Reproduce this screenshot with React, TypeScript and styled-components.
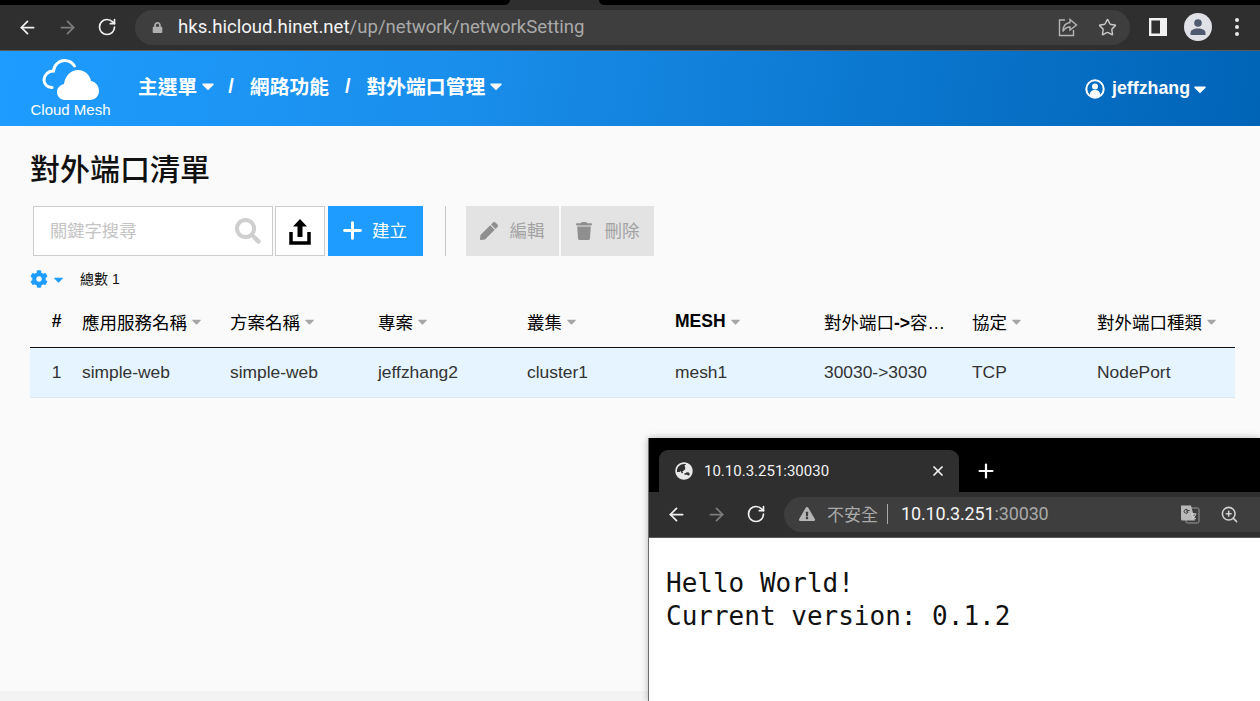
import styled, { createGlobalStyle } from "styled-components";
import { ArrowLeft, ArrowRight, RotateCw, Star, Plus, X, ZoomIn } from "lucide-react";
import { FaCaretDown, FaCog, FaLock, FaPen, FaSearch, FaTrash, FaGlobeAsia, FaExclamationTriangle } from "react-icons/fa";

const SANS = `"Liberation Sans", "Noto Sans CJK TC", sans-serif`;
const UI = `"Roboto", "Noto Sans CJK TC", sans-serif`;

const GlobalStyle = createGlobalStyle`
  html, body { margin: 0; padding: 0; background: #fafafa; }
  * { box-sizing: border-box; }
`;

const Page = styled.div`
  position: relative;
  width: 1260px;
  height: 701px;
  overflow: hidden;
  display: flex;
  flex-direction: column;
  background: #fafafa;
  font-family: ${SANS};
`;

// Browser chrome
const TabEdge = styled.div`
  display: flex;
  height: 5px;
  background: #2f2f2f;
  justify-content: space-between;
`;

const TabEdgePiece = styled.div<{ $w: number; $corner: "left" | "right" }>`
  width: ${(p) => p.$w}px;
  background: #000;
  border-bottom-${(p) => p.$corner}-radius: 5px;
`;

const BrowserBar = styled.div`
  height: 46px;
  display: flex;
  align-items: center;
  background: #2f2f2f;
  border-bottom: 1px solid #5a5a5a;
  padding: 0 0 1px 17px;
  color: #f1f1f1;
`;

const NavIcons = styled.div<{ $gap: number }>`
  display: flex;
  align-items: center;
  gap: ${(p) => p.$gap}px;
`;

const Omnibox = styled.div`
  width: 995px;
  height: 35px;
  margin-left: 18px;
  border-radius: 18px;
  background: #3e3e3e;
  display: flex;
  align-items: center;
  padding: 0 13px 0 17px;
`;

const Url = styled.span`
  flex: 1;
  margin-left: 15px;
  font-family: ${UI};
  font-size: 18.6px;
  color: #a9a9a9;
  white-space: nowrap;
  b { font-weight: 400; color: #f4f4f4; }
`;

const OmniIcons = styled.div`
  display: flex;
  align-items: center;
  gap: 20px;
  color: #c8c8c8;
`;

const BarEnd = styled.div`
  display: flex;
  align-items: center;
  margin-left: 19px;
`;

const Avatar = styled.div`
  width: 28px;
  height: 28px;
  margin-left: 17px;
  border-radius: 50%;
  background: #dfe1e6;
  display: flex;
  align-items: center;
  justify-content: center;
`;

const Dots = styled.div`
  margin-left: 23px;
  display: flex;
  flex-direction: column;
  gap: 3px;
  i {
    width: 4px;
    height: 4px;
    border-radius: 50%;
    background: #e8e8e8;
  }
`;

// App header
const AppHeader = styled.header`
  height: 75px;
  display: flex;
  align-items: center;
  color: #fff;
  background: linear-gradient(97deg, #1e9cff 0%, #1a8fec 35%, #0b77cf 70%, #0064b6 100%);
  padding: 0 50px 0 30px;
`;

const Logo = styled.div`
  width: 81px;
  display: flex;
  flex-direction: column;
  align-items: center;
  font-size: 15px;
  line-height: 17px;
  margin-top: -2px;
  white-space: nowrap;
  svg { margin-bottom: -1px; }
`;

const Breadcrumb = styled.nav`
  display: flex;
  align-items: center;
  margin-left: 27px;
  margin-top: -6px;
  flex: 1;
  font-size: 19.8px;
  font-weight: 700;
`;

const Crumb = styled.span`
  display: flex;
  align-items: center;
  gap: 1px;
  svg { margin-right: -6px; }
`;

const Slash = styled.span`
  margin: 2px 16px 0;
`;

const UserMenu = styled.div`
  display: flex;
  align-items: center;
  font-size: 17.8px;
  font-weight: 700;
  span { margin-left: 7px; }
`;

// Content
const Content = styled.main`
  flex: 1;
  padding: 25px 25px 0 30px;
`;

const Title = styled.h1`
  margin: 0;
  height: 38px;
  font-size: 30px;
  line-height: 38px;
  font-weight: 500;
  color: #111;
`;

const Toolbar = styled.div`
  display: flex;
  margin: 17px 0 0 3px;
  height: 50px;
`;

const SearchBox = styled.div`
  width: 240px;
  border: 1px solid #ccc;
  background: #fff;
  display: flex;
  align-items: center;
  justify-content: space-between;
  padding: 0 11px 3px 16px;
  font-size: 17.3px;
  color: #c4c4c4;
  margin-right: 2px;
  svg { margin-top: 3px; }
`;

const UploadButton = styled.div`
  width: 50px;
  border: 1px solid #ccc;
  background: #fff;
  display: flex;
  align-items: center;
  justify-content: center;
  margin-right: 3px;
`;

const ActionButton = styled.div<{ $primary?: boolean; $width: number }>`
  width: ${(p) => p.$width}px;
  display: flex;
  align-items: center;
  justify-content: center;
  gap: ${(p) => (p.$primary ? 6 : 11)}px;
  font-size: 17.6px;
  background: ${(p) => (p.$primary ? "#1e9cff" : "#e3e3e3")};
  color: ${(p) => (p.$primary ? "#fff" : "#a3a3a3")};
  margin-right: 2px;
  padding: 0 ${(p) => (p.$primary ? 5 : 0)}px 3px 0;
  svg {
    margin-top: ${(p) => (p.$primary ? 1 : 3)}px;
    color: ${(p) => (p.$primary ? "#fff" : "#8f8f8f")};
  }
`;

const Divider = styled.div`
  width: 1px;
  background: #c8c8c8;
  margin: 0 20px 0 20px;
`;

const SummaryRow = styled.div`
  display: flex;
  align-items: center;
  height: 20px;
  margin-top: 13px;
  color: #1e9cff;
`;

const SummaryCaret = styled(FaCaretDown)`
  margin-left: 3px;
`;

const Total = styled.span`
  margin: -2px 0 0 14px;
  font-size: 14px;
  color: #111;
`;

const GridRow = styled.div`
  display: grid;
  grid-template-columns: 52px 148px 148px 149px 148px 149px 148px 125px 138px;
  align-items: center;
`;

const HeadRow = styled(GridRow)`
  height: 50px;
  margin-top: 9px;
  padding-bottom: 3px;
  border-bottom: 1px solid #111;
`;

const BodyRow = styled(GridRow)`
  height: 50px;
  background: #e6f4ff;
  border-bottom: 1px solid #dbe7f0;
  padding-bottom: 1px;
  font-size: 17.4px;
  color: #333;
`;

const HeadCell = styled.div<{ $center?: boolean }>`
  display: flex;
  align-items: center;
  gap: 2px;
  font-size: 17.5px;
  font-weight: 400;
  color: #000;
  white-space: nowrap;
  justify-content: ${(p) => (p.$center ? "center" : "flex-start")};
  padding-left: ${(p) => (p.$center ? "1px" : "0")};
  svg { color: #a6a6a6; }
`;

const Strong = styled.b`
  font-weight: 700;
`;

const Cell = styled.div<{ $center?: boolean }>`
  text-align: ${(p) => (p.$center ? "center" : "left")};
  padding-left: ${(p) => (p.$center ? "1px" : "0")};
`;

const FootStrip = styled.div`
  height: 10px;
  background: #f3f3f3;
`;

// Second browser window, lying over the page
const FloatingWindow = styled.section`
  position: absolute;
  left: 648px;
  top: 438px;
  width: 612px;
  height: 263px;
  background: #fff;
  border-left: 1px solid #6b6b6b;
  box-shadow: 0 0 7px rgba(0, 0, 0, 0.28);
  display: flex;
  flex-direction: column;
`;

const TabStrip = styled.div`
  height: 54px;
  flex: none;
  background: #000;
  display: flex;
  align-items: flex-end;
  padding-left: 10px;
  color: #fff;
`;

const Tab = styled.div`
  width: 300px;
  height: 42px;
  background: #2f2f2f;
  border-radius: 9px 9px 0 0;
  display: flex;
  align-items: center;
  padding: 0 13px 0 16px;
  font-family: ${UI};
  font-size: 15px;
  color: #f2f2f2;
  span { flex: 1; margin-left: 11px; }
`;

const NewTab = styled.div`
  margin: 0 0 10px 16px;
  height: 22px;
  display: flex;
  align-items: center;
`;

const WindowBar = styled.div`
  height: 46px;
  flex: none;
  background: #2f2f2f;
  border-bottom: 1px solid #5a5a5a;
  display: flex;
  align-items: center;
  padding: 0 0 1px 17px;
  color: #f1f1f1;
`;

const WindowOmnibox = styled.div`
  flex: 1;
  height: 35px;
  margin-left: 18px;
  background: #3e3e3e;
  border-radius: 18px 0 0 18px;
  display: flex;
  align-items: center;
  padding: 0 21px 0 15px;
  font-family: ${UI};
  font-size: 18px;
  letter-spacing: -0.15px;
  color: #a9a9a9;
`;

const Insecure = styled.span`
  margin: -1px 0 0 12px;
  font-size: 17px;
  letter-spacing: 0;
  color: #a9a9a9;
`;

const Sep = styled.i`
  width: 1px;
  height: 20px;
  background: #a9a9a9;
  margin: 0 13px 0 9px;
`;

const Address = styled.span`
  flex: 1;
  margin-top: -1px;
  b { font-weight: 400; color: #f4f4f4; }
`;

const Plain = styled.pre`
  margin: 29px 0 0 17px;
  font-family: "DejaVu Sans Mono", monospace;
  font-size: 26px;
  line-height: 33px;
  color: #111;
`;

// Drawings
const Cloud = () => (
  <svg width="60" height="44" viewBox="0 0 60 44">
    <path
      d="M33.500 8C31 4 27 2.500 23.500 2.500 18 2.500 13 7 12.500 13 7 13 3 17.500 3 22c0 4 3 7 8 7.500"
      fill="none"
      stroke="#fff"
      strokeWidth="3"
      strokeLinecap="round"
    />
    <path
      d="M24 42c-5 0-8-4-8-8s3-7 7-8c1-8 7-14 14-14s12 5 13 11c5 1 8 5 8 10 0 5-4 9-9 9z"
      fill="#fff"
    />
  </svg>
);

const UserCircle = () => (
  <svg width="20" height="20" viewBox="0 0 20 20">
    <circle cx="10" cy="10" r="8.700" fill="none" stroke="#fff" strokeWidth="2" />
    <circle cx="10" cy="7.500" r="3" fill="#fff" />
    <path d="M4.800 16c0-3.500 2-5 5.200-5s5.200 1.500 5.200 5l-2 2.200h-6.500z" fill="#fff" />
  </svg>
);

const UploadIcon = () => (
  <svg width="22" height="27" viewBox="0 0 22 27">
    <path d="M11 1l7 7.500h-4.500V19h-5V8.500H4z" fill="#000" />
    <path d="M2 14v11h18V14" fill="none" stroke="#000" strokeWidth="3.500" />
  </svg>
);

const ShareIcon = () => (
  <svg width="20" height="20" viewBox="0 0 20 20" fill="none" stroke="#b5b5b5" strokeWidth="1.400">
    <path d="M7 3H1.500v15.500h14V13" />
    <path d="M12 2.500l6.500 5.500-6.500 5V10C8.500 10 6.500 11.500 5 14.500 5 9.500 7.500 6 12 5.500z" />
  </svg>
);

const SidePanelIcon = () => (
  <svg width="18" height="18" viewBox="0 0 18 18">
    <path d="M1.200 1.200h15.600v15.600H1.200z" fill="none" stroke="#f1f1f1" strokeWidth="2.400" />
    <path d="M11 1.200h6v15.600h-6z" fill="#f1f1f1" />
  </svg>
);

const AvatarPerson = () => (
  <svg width="18" height="18" viewBox="0 0 18 18">
    <circle cx="9" cy="5" r="3.800" fill="#4f5a70" />
    <path d="M1.500 17v-2c0-3 3-4.500 7.500-4.500s7.500 1.500 7.500 4.500v2z" fill="#4f5a70" />
  </svg>
);

const TranslateIcon = () => (
  <svg width="20" height="20" viewBox="0 0 20 20">
    <rect x="6" y="4" width="13" height="15" rx="1.500" fill="none" stroke="#9a9a9a" strokeWidth="1" />
    <path d="M1 1.500h10l4 15H2.500A1.500 1.500 0 0 1 1 15z" fill="#b9b9b9" />
    <path d="M9.500 6.500H6.800v1.400h1.300a2 2 0 1 1-.5-2" fill="none" stroke="#3e3e3e" strokeWidth="1" />
    <path d="M11 10h5.500M13.800 9v1.500M15.500 10.500c-.5 2-2 3.500-4 4.500M12 11.500c.7 1.300 2.300 2.800 4 3.500" fill="none" stroke="#dcdcdc" strokeWidth="1" />
  </svg>
);

const columns = ["應用服務名稱", "方案名稱", "專案", "叢集"];
const cells = ["simple-web", "simple-web", "jeffzhang2", "cluster1", "mesh1", "30030->3030", "TCP", "NodePort"];

export default function App() {
  return (
    <Page>
      <GlobalStyle />
      <TabEdge>
        <TabEdgePiece $w={510} $corner="right" />
        <TabEdgePiece $w={661} $corner="left" />
      </TabEdge>
      <BrowserBar>
        <NavIcons $gap={19}>
          <ArrowLeft size={21} strokeWidth={2} />
          <ArrowRight size={21} strokeWidth={2} color="#7d7d7d" />
          <RotateCw size={20} strokeWidth={2} />
        </NavIcons>
        <Omnibox>
          <FaLock size={11} color="#b0b0b0" />
          <Url>
            <b>hks.hicloud.hinet.net</b>/up/network/networkSetting
          </Url>
          <OmniIcons>
            <ShareIcon />
            <Star size={19} strokeWidth={1.8} />
          </OmniIcons>
        </Omnibox>
        <BarEnd>
          <SidePanelIcon />
          <Avatar>
            <AvatarPerson />
          </Avatar>
          <Dots>
            <i />
            <i />
            <i />
          </Dots>
        </BarEnd>
      </BrowserBar>

      <AppHeader>
        <Logo>
          <Cloud />
          Cloud Mesh
        </Logo>
        <Breadcrumb>
          <Crumb>
            主選單
            <FaCaretDown size={20} />
          </Crumb>
          <Slash>/</Slash>
          <Crumb>網路功能</Crumb>
          <Slash>/</Slash>
          <Crumb>
            對外端口管理
            <FaCaretDown size={20} />
          </Crumb>
        </Breadcrumb>
        <UserMenu>
          <UserCircle />
          <span>jeffzhang</span>
          <FaCaretDown size={20} />
        </UserMenu>
      </AppHeader>

      <Content>
        <Title>對外端口清單</Title>
        <Toolbar>
          <SearchBox>
            關鍵字搜尋
            <FaSearch size={26} color="#cfcfcf" />
          </SearchBox>
          <UploadButton>
            <UploadIcon />
          </UploadButton>
          <ActionButton $primary $width={95}>
            <Plus size={27} strokeWidth={2.6} />
            建立
          </ActionButton>
          <Divider />
          <ActionButton $width={93}>
            <FaPen size={18} />
            編輯
          </ActionButton>
          <ActionButton $width={93}>
            <FaTrash size={18} />
            刪除
          </ActionButton>
        </Toolbar>
        <SummaryRow>
          <FaCog size={18} />
          <SummaryCaret size={15} />
          <Total>總數 1</Total>
        </SummaryRow>
        <HeadRow>
          <HeadCell $center>
            <Strong>#</Strong>
          </HeadCell>
          {columns.map((name) => (
            <HeadCell key={name}>
              {name}
              <FaCaretDown size={15} />
            </HeadCell>
          ))}
          <HeadCell>
            <Strong>MESH</Strong>
            <FaCaretDown size={15} />
          </HeadCell>
          <HeadCell>
            <span>
              對外端口<Strong>-&gt;</Strong>容…
            </span>
          </HeadCell>
          <HeadCell>
            協定
            <FaCaretDown size={15} />
          </HeadCell>
          <HeadCell>
            對外端口種類
            <FaCaretDown size={15} />
          </HeadCell>
        </HeadRow>
        <BodyRow>
          <Cell $center>1</Cell>
          {cells.map((text, i) => (
            <Cell key={i}>{text}</Cell>
          ))}
        </BodyRow>
      </Content>
      <FootStrip />

      <FloatingWindow>
        <TabStrip>
          <Tab>
            <FaGlobeAsia size={18} color="#e8e8e8" />
            <span>10.10.3.251:30030</span>
            <X size={16} strokeWidth={2.6} />
          </Tab>
          <NewTab>
            <Plus size={22} strokeWidth={2.4} />
          </NewTab>
        </TabStrip>
        <WindowBar>
          <NavIcons $gap={19}>
            <ArrowLeft size={21} strokeWidth={2} />
            <ArrowRight size={21} strokeWidth={2} color="#7d7d7d" />
            <RotateCw size={20} strokeWidth={2} />
          </NavIcons>
          <WindowOmnibox>
            <FaExclamationTriangle size={16} color="#b5b5b5" />
            <Insecure>不安全</Insecure>
            <Sep />
            <Address>
              <b>10.10.3.251</b>:30030
            </Address>
            <NavIcons $gap={20}>
              <TranslateIcon />
              <ZoomIn size={19} strokeWidth={2} color="#d0d0d0" />
            </NavIcons>
          </WindowOmnibox>
        </WindowBar>
        <Plain>{"Hello World!\nCurrent version: 0.1.2"}</Plain>
      </FloatingWindow>
    </Page>
  );
}
